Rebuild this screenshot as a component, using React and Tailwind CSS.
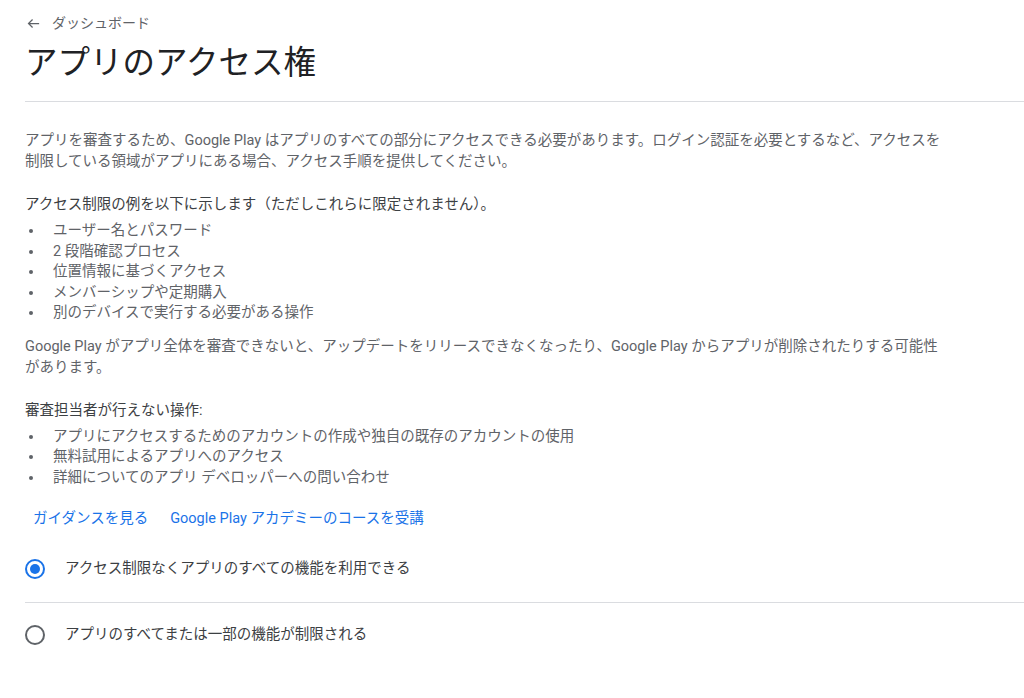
import { useState } from 'react';

const font = { fontFamily: '"Roboto", "Noto Sans CJK JP", sans-serif' };

const examples = [
  'ユーザー名とパスワード',
  '2 段階確認プロセス',
  '位置情報に基づくアクセス',
  'メンバーシップや定期購入',
  '別のデバイスで実行する必要がある操作',
];

const notAllowed = [
  'アプリにアクセスするためのアカウントの作成や独自の既存のアカウントの使用',
  '無料試用によるアプリへのアクセス',
  '詳細についてのアプリ デベロッパーへの問い合わせ',
];

function Bullets({ items }) {
  return (
    <ul className="mt-[6px]">
      {items.map((t) => (
        <li key={t} className="flex items-center leading-[20.5px]">
          <span className="w-[28px] pl-[4px] flex">
            <span className="w-[4px] h-[4px] rounded-full bg-[#5f6368]" />
          </span>
          <span>{t}</span>
        </li>
      ))}
    </ul>
  );
}

function Radio({ checked, label, onClick }) {
  return (
    <button onClick={onClick} className="flex items-center h-[24px] text-left">
      <span className={`w-[20px] h-[20px] ml-[25px] rounded-full border-2 flex items-center justify-center ${checked ? 'border-[#1a73e8]' : 'border-[#5f6368]'}`}>
        {checked && <span className="w-[10px] h-[10px] rounded-full bg-[#1a73e8]" />}
      </span>
      <span className="ml-[20px] text-[14.5px] text-[#3c4043]">{label}</span>
    </button>
  );
}

export default function App() {
  const [choice, setChoice] = useState('all');

  return (
    <div className="min-h-screen bg-white" style={font}>
      <div className="pl-[25px] pt-[13px]">
        <a className="flex items-center gap-[11px] text-[14px] text-[#5f6368] h-[20px]">
          <svg width="15" height="15" viewBox="0 0 24 24" fill="none" stroke="#5f6368" strokeWidth="2" className="ml-[1px]">
            <path d="M21 12H4M10.5 5.5 4 12l6.5 6.5" />
          </svg>
          <span>ダッシュボード</span>
        </a>
        <h1 className="text-[32.5px] leading-[44px] text-[#202124] mt-[8px]">アプリのアクセス権</h1>
      </div>
      <div className="ml-[25px] mt-[16px] border-t border-[#dadce0]" />

      <div className="pl-[25px] pt-[28px] text-[14.5px] text-[#5f6368] leading-[21px] max-w-[950px]">
        <p>
          アプリを審査するため、Google Play はアプリのすべての部分にアクセスできる必要があります。ログイン認証を必要とするなど、アクセスを制限している領域がアプリにある場合、アクセス手順を提供してください。
        </p>
        <p className="mt-[22px] text-[#3c4043]">アクセス制限の例を以下に示します（ただしこれらに限定されません）。</p>
        <Bullets items={examples} />
        <p className="mt-[12px]">
          Google Play がアプリ全体を審査できないと、アップデートをリリースできなくなったり、Google Play からアプリが削除されたりする可能性があります。
        </p>
        <p className="mt-[22px] text-[#3c4043]">審査担当者が行えない操作:</p>
        <Bullets items={notAllowed} />
      </div>

      <div className="flex gap-[6px] pl-[25px] mt-[13px] text-[14.5px] text-[#1a73e8]">
        <a className="px-[8px] h-[36px] flex items-center">ガイダンスを見る</a>
        <a className="px-[8px] h-[36px] flex items-center">Google Play アカデミーのコースを受講</a>
      </div>

      <div className="mt-[20px]">
        <Radio checked={choice === 'all'} label="アクセス制限なくアプリのすべての機能を利用できる" onClick={() => setChoice('all')} />
        <div className="ml-[25px] mt-[21px] mb-[20px] border-t border-[#dadce0]" />
        <Radio checked={choice === 'some'} label="アプリのすべてまたは一部の機能が制限される" onClick={() => setChoice('some')} />
      </div>
    </div>
  );
}
